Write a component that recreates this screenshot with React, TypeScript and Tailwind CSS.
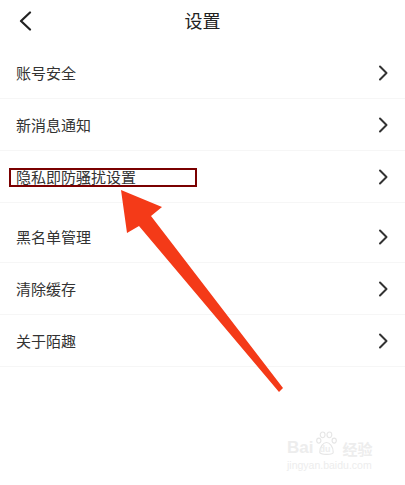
import React from "react";

const items = [
  ["账号安全", "新消息通知", "隐私即防骚扰设置"],
  ["黑名单管理", "清除缓存", "关于陌趣"],
];

const Chevron: React.FC = () => (
  <svg width="10" height="16" viewBox="0 0 10 16" fill="none">
    <path d="M2 1.5 L8.5 8 L2 14.5" stroke="#333" strokeWidth="2" strokeLinecap="round" strokeLinejoin="round" />
  </svg>
);

export default function App() {
  return (
    <div
      className="relative h-[485px] w-[405px] overflow-hidden bg-white text-[#333]"
      style={{ fontFamily: '"Noto Sans CJK SC", "Noto Sans", sans-serif' }}
    >
      <div className="relative flex h-[47px] items-center justify-center">
        <svg className="absolute left-[18px] top-[11px]" width="16" height="20" viewBox="0 0 16 20" fill="none">
          <path d="M12 1.5 L3 10 L12 18.5" stroke="#222" strokeWidth="2.2" strokeLinecap="round" strokeLinejoin="round" />
        </svg>
        <span className="mt-[-7px] text-[18px] text-[#222]">设置</span>
      </div>

      {items.map((group, gi) => (
        <div key={gi} className={gi > 0 ? "mt-[8px]" : ""}>
          {group.map((label) => (
            <div
              key={label}
              className="flex h-[52px] items-center justify-between border-b border-[#f6f6f6] pl-[16px] pr-[17px]"
            >
              <span className="text-[15px] leading-none">{label}</span>
              <Chevron />
            </div>
          ))}
        </div>
      ))}

      {/* highlight box */}
      <div className="absolute left-[9px] top-[168px] h-[19px] w-[188px] border-[2.5px] border-[#7a0000]" />

      {/* arrow */}
      <svg className="absolute left-0 top-0" width="405" height="485" viewBox="0 0 405 485">
        <polygon
          points="121,190 162,207 151,216 283,388 279,392 139,226 127,233"
          fill="#f43a18"
        />
      </svg>

      {/* watermark */}
      <div className="absolute left-[287px] top-[431px] text-[#ededed]">
        <div className="flex items-end">
          <span className="text-[17px] font-bold leading-none" style={{ fontFamily: '"Liberation Sans", sans-serif' }}>
            Bai
          </span>
          <span className="relative ml-[1px] inline-block h-[25px] w-[25px]">
            <svg className="absolute left-0 top-0" width="25" height="25" viewBox="0 0 22 26" fill="none" stroke="#e6e6e6" strokeWidth="1.2">
              <ellipse cx="7" cy="4" rx="2.5" ry="3" />
              <ellipse cx="14" cy="4" rx="2.5" ry="3" />
              <ellipse cx="3" cy="10" rx="2.2" ry="2.6" />
              <ellipse cx="19" cy="10" rx="2.2" ry="2.6" />
              <path d="M4 22 C4 16 8 12 11 12 C14 12 18 16 18 22 C18 25 4 25 4 22 Z" />
            </svg>
            <span className="absolute left-[5px] top-[14px] text-[9px] font-bold leading-none" style={{ fontFamily: '"Liberation Sans", sans-serif' }}>
              du
            </span>
          </span>
          <span className="ml-[3px] text-[15px] font-bold leading-none">经验</span>
        </div>
        <div className="mt-[4px] text-[10.5px] leading-none" style={{ fontFamily: '"Liberation Sans", sans-serif' }}>
          jingyan.baidu.com
        </div>
      </div>
    </div>
  );
}
